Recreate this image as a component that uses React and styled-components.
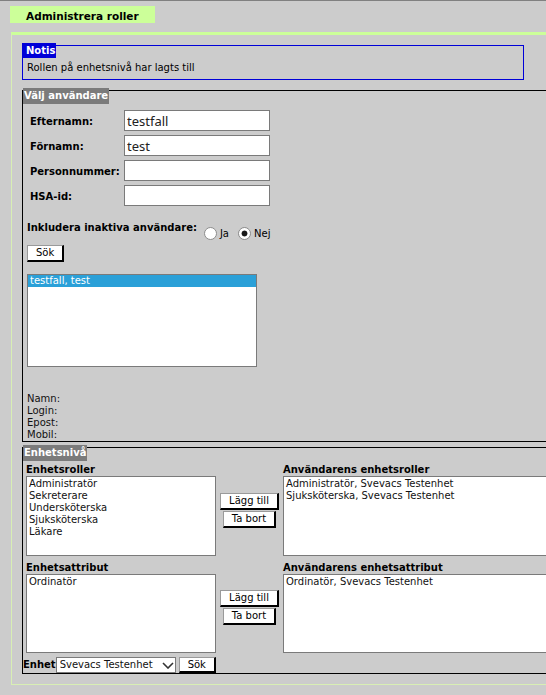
import React from 'react';
import styled, { createGlobalStyle } from 'styled-components';

const GlobalStyle = createGlobalStyle`
  html, body { margin: 0; padding: 0; overflow: hidden; background: #cccccc; }
  body { font-family: "DejaVu Sans", Verdana, sans-serif; font-size: 10px; color: #000; }
  * { box-sizing: border-box; }
`;

const Page = styled.div`
  min-height: 695px;
  border-top: 1px solid #808080;
  padding-top: 5px;
`;

const Tab = styled.div`
  margin-left: 10px;
  width: 145px;
  height: 17px;
  padding: 4px 0 0 16px;
  background: #ccff99;
  font-weight: bold;
  font-size: 10.5px;
  line-height: 13px;
`;

const Panel = styled.div`
  margin: 9px 0 0 11px;
  border-top: 3px solid #ccff99;
  border-left: 1px solid #d8efb4;
  border-bottom: 1px solid #d8efb4;
  padding: 10px 0 10px 10px;
`;

const Notice = styled.div`
  width: 502px;
  border: 1px solid #0000d8;
  padding: 0 0 5px 4px;
`;

const NoticeTitle = styled.div`
  width: fit-content;
  margin: -3px 0 0 -5px;
  padding: 0 1px 0 4px;
  background: #0000d8;
  color: #fff;
  font-weight: bold;
  line-height: 15px;
`;

const NoticeText = styled.div`
  margin-top: 4px;
  line-height: 12px;
`;

/* The fieldsets run past the right edge of the window in the original,
   so their right border is never seen. */
const Fieldset = styled.section`
  margin-top: ${p => p.$gap}px;
  border: 1px solid #000;
  border-right: none;
`;

const Legend = styled.div`
  width: fit-content;
  margin-top: -3px;
  padding: 0 1px;
  height: 16px;
  line-height: 16px;
  background: #7b7b7b;
  color: #fff;
  font-weight: bold;
`;

const UserBody = styled.div`
  padding-left: 4px;
`;

const FormGrid = styled.div`
  display: grid;
  grid-template-columns: 94px 146px;
  row-gap: 4px;
  margin: 6px 0 0 3px;
`;

const FieldLabel = styled.label`
  align-self: center;
  padding-top: 3px;
  font-weight: bold;
  line-height: 12px;
`;

const TextInput = styled.input`
  width: 146px;
  height: 21px;
  margin: 0;
  padding: 0 2px;
  border: 1px solid #7a7a7a;
  background: #fff;
  font-family: "Noto Sans", "Open Sans", sans-serif;
  font-size: 13px;
  color: #222;
  outline: none;
`;

const InactiveRow = styled.div`
  display: flex;
  align-items: flex-start;
  margin-top: 16px;
`;

const BoldText = styled.span`
  font-weight: bold;
  line-height: 12px;
`;

const RadioGroup = styled.div`
  display: flex;
  gap: 9px;
  margin: 5px 0 0 7px;
`;

const RadioOption = styled.label`
  display: inline-flex;
  align-items: flex-end;
  gap: 3px;
  line-height: 12px;
`;

const Radio = styled.input.attrs({ type: 'radio' })`
  appearance: none;
  margin: 0;
  width: 13px;
  height: 13px;
  border: 1px solid #8c8c8c;
  border-radius: 50%;
  background: #fff;
  &:checked {
    background: radial-gradient(circle at center, #1a1a1a 0 2.6px, #fff 3.3px);
  }
`;

const Button = styled.button`
  display: block;
  height: ${p => (p.$short ? 16 : 17)}px;
  margin: ${p => p.$m || '0'};
  padding: 0 8px;
  background: #fff;
  border-style: solid;
  border-width: 1px 2px 2px 1px;
  border-color: #9a9a9a #000 #000 #9a9a9a;
  font-family: "DejaVu Sans", Verdana, sans-serif;
  font-size: 10px;
  line-height: 12px;
  color: #000;
  white-space: nowrap;
  cursor: pointer;
`;

const ListBox = styled.div`
  width: ${p => (p.$w ? `${p.$w}px` : 'auto')};
  height: ${p => p.$h}px;
  margin-top: ${p => p.$mt || 0}px;
  padding-top: ${p => p.$pt || 0}px;
  background: #fff;
  border: 1px solid #7a7a7a;
  ${p => (p.$open ? 'border-right: none;' : '')}
  overflow: hidden;
`;

const ListItem = styled.div`
  height: 12px;
  line-height: 12px;
  padding: 0 2px;
  white-space: nowrap;
  background: ${p => (p.$selected ? '#2aa0d8' : 'transparent')};
  color: ${p => (p.$selected ? '#fff' : '#111')};
`;

const Info = styled.div`
  margin-top: 26px;
  line-height: 12px;
  color: #111;
`;

const UnitGrid = styled.div`
  display: grid;
  grid-template-columns: 190px 67px 1fr;
  row-gap: 6px;
  margin: 3px 0 0 3px;
`;

const Column = styled.div`
  display: flex;
  flex-direction: column;
  min-width: 0;
`;

const ColLabel = styled.div`
  font-weight: bold;
  line-height: 12px;
  white-space: nowrap;
`;

const ButtonStack = styled.div`
  align-self: center;
  display: flex;
  flex-direction: column;
  align-items: center;
  gap: 1px;
`;

const BottomRow = styled.div`
  display: flex;
  align-items: flex-start;
  height: 16px;
  margin-top: 4px;
`;

const RowLabel = styled.span`
  font-weight: bold;
  line-height: 16px;
`;

const SelectWrap = styled.div`
  position: relative;
  width: 120px;
  height: 16px;
`;

const Select = styled.select`
  appearance: none;
  width: 120px;
  height: 16px;
  margin: 0;
  padding: 0 0 0 3px;
  border: 1px solid #7a7a7a;
  border-radius: 0;
  background: #fff;
  font-family: "DejaVu Sans", Verdana, sans-serif;
  font-size: 10px;
  line-height: 14px;
  color: #111;
  outline: none;
`;

const Chevron = styled.svg`
  position: absolute;
  right: 2px;
  top: 5px;
  pointer-events: none;
`;

const units = ['Administratör', 'Sekreterare', 'Undersköterska', 'Sjuksköterska', 'Läkare'];

function AddRemove() {
  return (
    <ButtonStack>
      <Button type="button">Lägg till</Button>
      <Button type="button">Ta bort</Button>
    </ButtonStack>
  );
}

export default function App() {
  return (
    <>
      <GlobalStyle />
      <Page>
        <Tab>Administrera roller</Tab>
        <Panel>
          <Notice>
            <NoticeTitle>Notis</NoticeTitle>
            <NoticeText>Rollen på enhetsnivå har lagts till</NoticeText>
          </Notice>

          <Fieldset $gap={10}>
            <Legend>Välj användare</Legend>
            <UserBody>
              <FormGrid>
                <FieldLabel>Efternamn:</FieldLabel>
                <TextInput defaultValue="testfall" />
                <FieldLabel>Förnamn:</FieldLabel>
                <TextInput defaultValue="test" />
                <FieldLabel>Personnummer:</FieldLabel>
                <TextInput defaultValue="" />
                <FieldLabel>HSA-id:</FieldLabel>
                <TextInput defaultValue="" />
              </FormGrid>

              <InactiveRow>
                <BoldText>Inkludera inaktiva användare:</BoldText>
                <RadioGroup>
                  <RadioOption>
                    <Radio name="inaktiva" value="ja" />
                    Ja
                  </RadioOption>
                  <RadioOption>
                    <Radio name="inaktiva" value="nej" defaultChecked />
                    Nej
                  </RadioOption>
                </RadioGroup>
              </InactiveRow>

              <Button type="button" $m="5px 0 0 0">Sök</Button>

              <ListBox $w={230} $h={93} $mt={12}>
                <ListItem $selected>testfall, test</ListItem>
              </ListBox>

              <Info>
                <div>Namn:</div>
                <div>Login:</div>
                <div>Epost:</div>
                <div>Mobil:</div>
              </Info>
            </UserBody>
          </Fieldset>

          <Fieldset $gap={5}>
            <Legend>Enhetsnivå</Legend>
            <UnitGrid>
              <Column>
                <ColLabel>Enhetsroller</ColLabel>
                <ListBox $h={80} $pt={1}>
                  {units.map(u => (
                    <ListItem key={u}>{u}</ListItem>
                  ))}
                </ListBox>
              </Column>
              <AddRemove />
              <Column>
                <ColLabel>Användarens enhetsroller</ColLabel>
                <ListBox $h={80} $pt={1} $open>
                  <ListItem>Administratör, Svevacs Testenhet</ListItem>
                  <ListItem>Sjuksköterska, Svevacs Testenhet</ListItem>
                </ListBox>
              </Column>

              <Column>
                <ColLabel>Enhetsattribut</ColLabel>
                <ListBox $h={79} $pt={1}>
                  <ListItem>Ordinatör</ListItem>
                </ListBox>
              </Column>
              <AddRemove />
              <Column>
                <ColLabel>Användarens enhetsattribut</ColLabel>
                <ListBox $h={79} $pt={1} $open>
                  <ListItem>Ordinatör, Svevacs Testenhet</ListItem>
                </ListBox>
              </Column>
            </UnitGrid>

            <BottomRow>
              <RowLabel>Enhet</RowLabel>
              <SelectWrap>
                <Select defaultValue="svevacs">
                  <option value="svevacs">Svevacs Testenhet</option>
                </Select>
                <Chevron width="12" height="7" viewBox="0 0 12 7">
                  <path d="M1 1 L6 6 L11 1" fill="none" stroke="#333" strokeWidth="1.6" />
                </Chevron>
              </SelectWrap>
              <Button type="button" $short $m="0 0 0 3px">Sök</Button>
            </BottomRow>
          </Fieldset>
        </Panel>
      </Page>
    </>
  );
}
